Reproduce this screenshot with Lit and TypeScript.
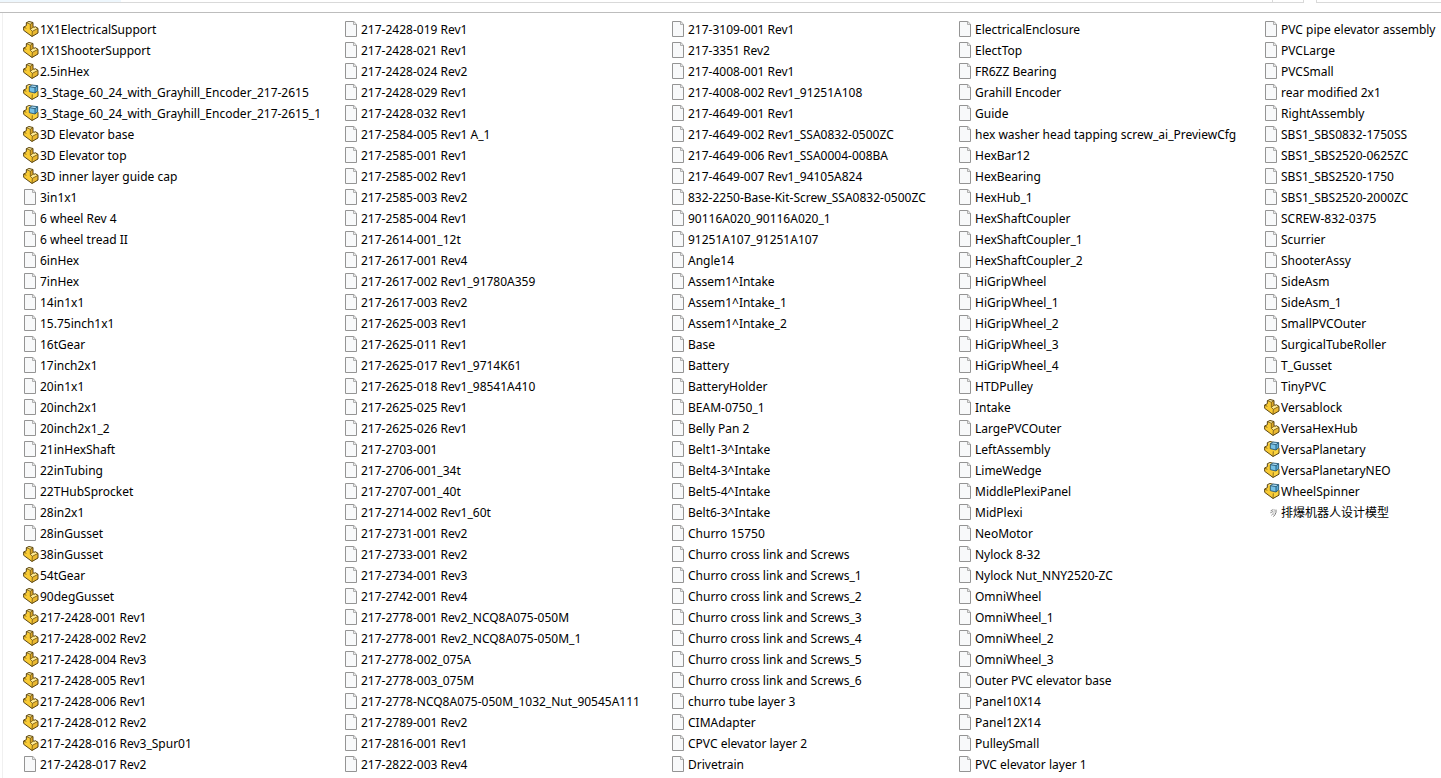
import { LitElement, html, svg, css } from "lit";
import { customElement, property } from "lit/decorators.js";

type Kind = "file" | "part" | "assembly" | "model";
interface Entry {
  name: string;
  kind: Kind;
}

const of = (kind: Kind, names: string): Entry[] =>
  names
    .trim()
    .split("\n")
    .map((n) => ({ name: n.trim(), kind }));

const ENTRIES: Entry[] = [
  ...of("part", `1X1ElectricalSupport
    1X1ShooterSupport
    2.5inHex`),
  ...of("assembly", `3_Stage_60_24_with_Grayhill_Encoder_217-2615
    3_Stage_60_24_with_Grayhill_Encoder_217-2615_1`),
  ...of("part", `3D Elevator base
    3D Elevator top
    3D inner layer guide cap`),
  ...of("file", `3in1x1
    6 wheel Rev 4
    6 wheel tread II
    6inHex
    7inHex
    14in1x1
    15.75inch1x1
    16tGear
    17inch2x1
    20in1x1
    20inch2x1
    20inch2x1_2
    21inHexShaft
    22inTubing
    22THubSprocket
    28in2x1
    28inGusset`),
  ...of("part", `38inGusset
    54tGear
    90degGusset
    217-2428-001 Rev1
    217-2428-002 Rev2
    217-2428-004 Rev3
    217-2428-005 Rev1
    217-2428-006 Rev1
    217-2428-012 Rev2
    217-2428-016 Rev3_Spur01`),
  ...of("file", `217-2428-017 Rev2
    217-2428-019 Rev1
    217-2428-021 Rev1
    217-2428-024 Rev2
    217-2428-029 Rev1
    217-2428-032 Rev1
    217-2584-005 Rev1 A_1
    217-2585-001 Rev1
    217-2585-002 Rev1
    217-2585-003 Rev2
    217-2585-004 Rev1
    217-2614-001_12t
    217-2617-001 Rev4
    217-2617-002 Rev1_91780A359
    217-2617-003 Rev2
    217-2625-003 Rev1
    217-2625-011 Rev1
    217-2625-017 Rev1_9714K61
    217-2625-018 Rev1_98541A410
    217-2625-025 Rev1
    217-2625-026 Rev1
    217-2703-001
    217-2706-001_34t
    217-2707-001_40t
    217-2714-002 Rev1_60t
    217-2731-001 Rev2
    217-2733-001 Rev2
    217-2734-001 Rev3
    217-2742-001 Rev4
    217-2778-001 Rev2_NCQ8A075-050M
    217-2778-001 Rev2_NCQ8A075-050M_1
    217-2778-002_075A
    217-2778-003_075M
    217-2778-NCQ8A075-050M_1032_Nut_90545A111
    217-2789-001 Rev2
    217-2816-001 Rev1
    217-2822-003 Rev4
    217-3109-001 Rev1
    217-3351 Rev2
    217-4008-001 Rev1
    217-4008-002 Rev1_91251A108
    217-4649-001 Rev1
    217-4649-002 Rev1_SSA0832-0500ZC
    217-4649-006 Rev1_SSA0004-008BA
    217-4649-007 Rev1_94105A824
    832-2250-Base-Kit-Screw_SSA0832-0500ZC
    90116A020_90116A020_1
    91251A107_91251A107
    Angle14
    Assem1^Intake
    Assem1^Intake_1
    Assem1^Intake_2
    Base
    Battery
    BatteryHolder
    BEAM-0750_1
    Belly Pan 2
    Belt1-3^Intake
    Belt4-3^Intake
    Belt5-4^Intake
    Belt6-3^Intake
    Churro 15750
    Churro cross link and Screws
    Churro cross link and Screws_1
    Churro cross link and Screws_2
    Churro cross link and Screws_3
    Churro cross link and Screws_4
    Churro cross link and Screws_5
    Churro cross link and Screws_6
    churro tube layer 3
    CIMAdapter
    CPVC elevator layer 2
    Drivetrain
    ElectricalEnclosure
    ElectTop
    FR6ZZ Bearing
    Grahill Encoder
    Guide
    hex washer head tapping screw_ai_PreviewCfg
    HexBar12
    HexBearing
    HexHub_1
    HexShaftCoupler
    HexShaftCoupler_1
    HexShaftCoupler_2
    HiGripWheel
    HiGripWheel_1
    HiGripWheel_2
    HiGripWheel_3
    HiGripWheel_4
    HTDPulley
    Intake
    LargePVCOuter
    LeftAssembly
    LimeWedge
    MiddlePlexiPanel
    MidPlexi
    NeoMotor
    Nylock 8-32
    Nylock Nut_NNY2520-ZC
    OmniWheel
    OmniWheel_1
    OmniWheel_2
    OmniWheel_3
    Outer PVC elevator base
    Panel10X14
    Panel12X14
    PulleySmall
    PVC elevator layer 1
    PVC pipe elevator assembly
    PVCLarge
    PVCSmall
    rear modified 2x1
    RightAssembly
    SBS1_SBS0832-1750SS
    SBS1_SBS2520-0625ZC
    SBS1_SBS2520-1750
    SBS1_SBS2520-2000ZC
    SCREW-832-0375
    Scurrier
    ShooterAssy
    SideAsm
    SideAsm_1
    SmallPVCOuter
    SurgicalTubeRoller
    T_Gusset
    TinyPVC`),
  ...of("part", `Versablock
    VersaHexHub`),
  ...of("assembly", `VersaPlanetary
    VersaPlanetaryNEO
    WheelSpinner`),
  ...of("model", `排爆机器人设计模型`),
];

const GLYPHS = {
  file: svg`
    <path d="M4.5 1.5h25l8 8v37h-33z" fill="#f8f9fa" stroke="#949494" stroke-width="3"/>
    <path d="M28.500 2v8.500h8" fill="#e8e8e8" stroke="#a0a0a0" stroke-width="2.4"/>`,
  part: svg`
    <g stroke-linejoin="round">
      <path d="M10 5 18 1.500l12 3V17l3 2 4-2 8 5v14L27 46.500 2 28V18l8-4z" fill="#f9cb35"/>
      <path d="M10 5 18 1.500l12 3-8 5z" fill="#fff0a6"/>
      <path d="M22 9.500l8-5V19l-8 6z" fill="#dba728"/>
      <path d="M22 25l13-8 10 5-17 9z" fill="#ffeb96"/>
      <path d="M28 31l17-9v14L27 46.500z" fill="#eab832"/>
      <path d="M10 5l12 4.500V25l6 6 17-9M28 31l-1 15M22 9.500l8-5M22 25l9-7M2 18l8 4"
        fill="none" stroke="#705717" stroke-width="2.400"/>
      <path d="M10 5 18 1.500l12 3V17l3 2 4-2 8 5v14L27 46.500 2 28V18l8-4z" fill="none" stroke="#5a4514" stroke-width="3"/>
    </g>`,
  assembly: svg`
    <g stroke-linejoin="round">
      <path d="M10 5 18 1.500l12 3 15 18v14L27 46.500 2 28V18l8-4z" fill="#f9cb35"/>
      <path d="M10 5 18 1.500l10 3-9 4z" fill="#fff0a6"/>
      <path d="M28 31l17-9v14L27 46.500z" fill="#fcd33d"/>
      <path d="M28 31l-1 15M2 18l8 4" fill="none" stroke="#705717" stroke-width="2.400"/>
      <path d="M10 5 18 1.500l12 3 15 18v14L27 46.500 2 28V18l8-4z" fill="none" stroke="#5a4514" stroke-width="3"/>
      <path d="M19 8 27 3l17 2v15l-8 7-17-4z" fill="#75c0e6"/>
      <path d="M19 8 27 3l17 2-8 6z" fill="#a9dcf4"/>
      <path d="M36 11l8-6v15l-8 7z" fill="#5baad3"/>
      <path d="M19 8 27 3l17 2v15l-8 7-17-4zM19 8l17 3 8-6M36 11v16" fill="none" stroke="#1d4b68" stroke-width="2.400"/>
    </g>`,
  model: svg`
    <g fill="none" stroke-linecap="round">
      <path d="M21 20l6-3M20 26l6-3M23 33l3-3" stroke="#8b8b8b" stroke-width="3"/>
      <path d="M36 18v7l-3 7-4 5" stroke="#7c7c7c" stroke-width="3"/>
      <path d="M31 17l-2 14" stroke="#bcbcbc" stroke-width="3"/>
    </g>`,
};

@customElement("file-entry")
export class FileEntry extends LitElement {
  @property({ attribute: false }) entry!: Entry;

  static styles = css`
    :host {
      display: flex;
      align-items: flex-start;
      gap: 1px;
      height: 21px;
      white-space: nowrap;
    }
    .icon {
      flex: none;
      width: 16px;
      height: 16px;
      margin-top: 2px;
    }
  `;

  render() {
    return html`<svg class="icon" viewBox="0 0 48 48" aria-hidden="true">${GLYPHS[this.entry.kind]}</svg
      ><span>${this.entry.name}</span>`;
  }
}

@customElement("app-root")
export class AppRoot extends LitElement {
  static styles = css`
    :host {
      display: flex;
      flex-direction: column;
      height: 100vh;
      overflow: hidden;
      background: #fff;
      color: #000;
      font: 12px/21px "Noto Sans", "Noto Sans CJK SC", sans-serif;
    }
    .toolbar {
      display: flex;
      gap: 12px;
      flex: none;
      height: 12px;
      border-bottom: 1px solid #bdbdbd;
    }
    .address,
    .search {
      display: flex;
      box-sizing: border-box;
      height: 3px;
      border-bottom: 1px solid #d9d9d9;
    }
    .address {
      flex: 1;
      justify-content: space-between;
      border-right: 1px solid #d9d9d9;
    }
    .progress {
      width: 121px;
      background: #eef7fd;
    }
    .refresh {
      width: 30px;
      border-left: 1px solid #d9d9d9;
    }
    .search {
      width: 125px;
      border-left: 1px solid #d9d9d9;
    }
    .pane {
      flex: 1;
      margin-left: 2px;
      padding: 6px 0 0 20px;
      border-left: 1px solid #f0f0f0;
      overflow: hidden;
    }
    .list {
      display: grid;
      grid-auto-flow: column;
      grid-template-rows: repeat(36, 21px);
      grid-template-columns: 321px 327px 287px 306px max-content;
      margin: 0;
      padding: 0;
      list-style: none;
    }
  `;

  render() {
    return html`
      <div class="toolbar">
        <div class="address">
          <div class="progress"></div>
          <div class="refresh"></div>
        </div>
        <div class="search"></div>
      </div>
      <main class="pane">
        <ul class="list">
          ${ENTRIES.map((e) => html`<li><file-entry .entry=${e}></file-entry></li>`)}
        </ul>
      </main>
    `;
  }
}
